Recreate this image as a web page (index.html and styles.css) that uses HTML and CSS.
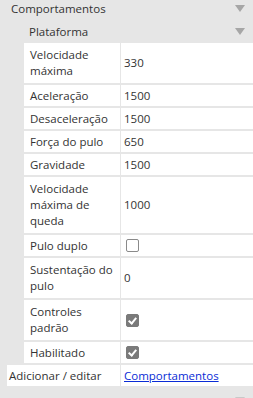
FILE: index.html
```html
<!DOCTYPE html>
<html lang="en">
<head>
    <meta charset="UTF-8">
    <title>Comportamentos</title>
    <link rel="stylesheet" href="styles.css">
</head>
<body>
    <div class="panel">
        <div class="section-head">
            <span>Comportamentos</span>
            <span class="arrow"></span>
        </div>
        <div class="group">
            <div class="group-head">
                <span>Plataforma</span>
                <span class="arrow"></span>
            </div>
            <div class="props">
                <div class="label multi">Velocidade máxima</div><div class="value">330</div>
                <div class="label">Aceleração</div><div class="value">1500</div>
                <div class="label">Desaceleração</div><div class="value">1500</div>
                <div class="label">Força do pulo</div><div class="value">650</div>
                <div class="label">Gravidade</div><div class="value">1500</div>
                <div class="label multi">Velocidade máxima de queda</div><div class="value">1000</div>
                <div class="label">Pulo duplo</div><div class="value"><span class="check"></span></div>
                <div class="label multi">Sustentação do pulo</div><div class="value">0</div>
                <div class="label multi">Controles padrão</div><div class="value"><span class="check on"></span></div>
                <div class="label">Habilitado</div><div class="value"><span class="check on"></span></div>
            </div>
        </div>
        <div class="props wide">
            <div class="label">Adicionar / editar</div><div class="value"><a href="#">Comportamentos</a></div>
        </div>
        <div class="section-head next">
            <span></span>
            <span class="arrow"></span>
        </div>
    </div>
</body>
</html>
```

FILE: styles.css
```css
* {
    box-sizing: border-box;
}
body {
    margin: 0;
    background: #e6e6e6;
    font-family: "Open Sans", "Noto Sans", sans-serif;
    font-size: 11.5px;
    color: #333;
}
.panel {
    width: 253px;
}
.section-head, .group-head {
    display: flex;
    justify-content: space-between;
    align-items: center;
    height: 20px;
    padding: 0 8px 0 11px;
}
.section-head {
    margin-top: -2px;
}
.group {
    padding-left: 24px;
}
.group-head {
    height: 22px;
    margin: 2px 0 1px;
    padding-left: 5px;
}
.arrow {
    width: 0;
    height: 0;
    border-left: 5px solid transparent;
    border-right: 5px solid transparent;
    border-top: 7px solid #a6a6a6;
}
.props {
    display: grid;
    grid-template-columns: 96px 1fr;
    gap: 2px 1px;
    padding-bottom: 2px;
}
.props.wide {
    grid-template-columns: 113px 1fr;
    padding-left: 7px;
}
.label, .value {
    background: #fff;
    display: flex;
    align-items: center;
    line-height: 16px;
}
.label {
    min-height: 21px;
    padding: 2px 4px 2px 6px;
}
.label.multi {
    padding-top: 4px;
    padding-bottom: 4px;
}
.value {
    padding-left: 3px;
}
.props.wide .label {
    padding-left: 2px;
}
a {
    color: #0a2cd6;
}
.check {
    width: 13px;
    height: 13px;
    border: 1px solid #8a8a8a;
    border-radius: 2px;
    margin-left: 2px;
    position: relative;
}
.check.on {
    background: #7a7a7a;
    border-color: #7a7a7a;
}
.check.on::after {
    content: "";
    position: absolute;
    left: 3px;
    top: 1px;
    width: 3px;
    height: 6px;
    border: solid #fff;
    border-width: 0 2px 2px 0;
    transform: rotate(40deg);
}
.section-head.next {
    height: 12px;
    margin-top: 6px;
}
.section-head.next .arrow {
    border-top-color: #c8c8c8;
}
```
